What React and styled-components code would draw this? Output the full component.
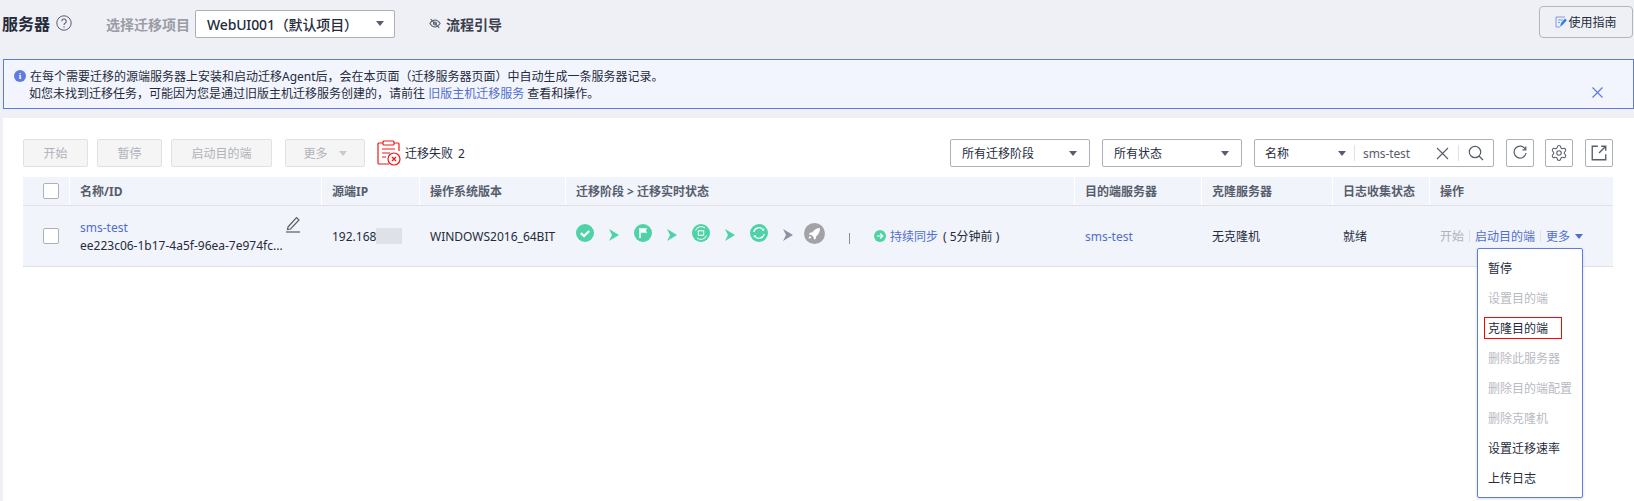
import React from "react";
import styled, { createGlobalStyle } from "styled-components";
import { Settings } from "lucide-react";

const Global = createGlobalStyle`
  html, body { margin: 0; padding: 0; height: 100%; overflow: hidden; background: #eff0f6; }
  body { font-family: "Noto Sans", "Noto Sans CJK SC", sans-serif; font-size: 12px; color: #252b3a; }
  * { box-sizing: border-box; }
`;

const Page = styled.div`
  position: relative;
  width: 1634px;
  height: 501px;
  padding-left: 3px;
  overflow: hidden;
  display: flex;
  flex-direction: column;
`;
const TopBar = styled.header`
  height: 47px;
  margin-bottom: 12px;
  display: flex;
  align-items: center;
  padding-right: 1px;
`;
const Title = styled.h1`
  margin: 0 0 0 -1px;
  font-size: 16px;
  font-weight: 700;
  line-height: 22px;
  color: #252b3a;
`;
const HelpIcon = styled.svg`
  width: 16px;
  height: 16px;
  margin: -2px 0 0 6px;
`;
const ProjectLabel = styled.span`
  margin-left: 34px;
  font-size: 14px;
  font-weight: 700;
  color: #9a9ca6;
`;
const ProjectSelect = styled.div`
  margin-left: 5px;
  width: 200px;
  height: 28px;
  background: #fff;
  border: 1px solid #adb0b8;
  border-radius: 2px;
  display: flex;
  align-items: center;
  justify-content: space-between;
  padding: 0 10px 0 11px;
  font-size: 14px;
  font-weight: 500;
`;
const ProjectName = styled.span`
  letter-spacing: -0.15px;
`;
const Caret = styled.i`
  display: block;
  width: 0;
  height: 0;
  margin-left: ${p => p.$ml || 0}px;
  border-left: 4px solid transparent;
  border-right: 4px solid transparent;
  border-top: 5px solid ${p => p.$color || "#575d6c"};
`;
const GuideLink = styled.span`
  margin-left: 34px;
  display: flex;
  align-items: center;
  gap: 5px;
  font-size: 14px;
  font-weight: 700;
  color: #3c404c;
`;
const GuideButton = styled.button`
  margin: -3px 0 0 auto;
  width: 94px;
  height: 32px;
  background: transparent;
  border: 1px solid #b3b5bd;
  border-radius: 4px;
  display: flex;
  align-items: center;
  justify-content: center;
  gap: 1px;
  font: inherit;
  font-size: 12px;
  color: #252b3a;
`;
const Alert = styled.section`
  position: relative;
  height: 50px;
  margin-bottom: 9px;
  border: 1px solid #5e7ce0;
  background: #f2f5fe;
  padding: 8px 0 0 26px;
  line-height: 17px;
  color: #252b3a;
`;
const AlertLine = styled.div`
  white-space: nowrap;
`;
const SecondLine = styled(AlertLine)`
  margin-left: -1px;
`;
const InfoDot = styled.span`
  position: absolute;
  left: 10px;
  top: 10px;
  width: 12px;
  height: 12px;
  border-radius: 50%;
  background: #5e7ce0;
  color: #fff;
  font: 700 9px/12px "Liberation Serif", serif;
  text-align: center;
`;
const AlertLink = styled.span`
  color: #526ecc;
`;
const CloseAlert = styled.svg`
  position: absolute;
  right: 30px;
  top: 27px;
  width: 11px;
  height: 11px;
`;
const Panel = styled.main`
  flex: 1;
  background: #fff;
  padding: 21px 21px 0 20px;
`;
const Toolbar = styled.div`
  display: flex;
  align-items: center;
  height: 28px;
  margin-bottom: 10px;
`;
const Action = styled.button`
  width: ${p => p.$w}px;
  height: 28px;
  margin-right: ${p => p.$gap}px;
  border: 1px solid #dfe1e6;
  border-radius: 2px;
  background: #f5f5f6;
  color: #b0b2ba;
  font: inherit;
  font-size: 12px;
  display: flex;
  align-items: center;
  justify-content: center;
  gap: 11px;
`;
const FailIcon = styled.svg`
  width: 24px;
  height: 26px;
  margin-right: 4px;
`;
const FailText = styled.span`
  font-size: 12px;
  color: #252b3a;
  word-spacing: 2px;
`;
const Filters = styled.div`
  margin-left: auto;
  display: flex;
  align-items: center;
`;
const Dropdown = styled.div`
  width: 140px;
  height: 28px;
  margin-right: 12px;
  border: 1px solid #adb0b8;
  border-radius: 2px;
  display: flex;
  align-items: center;
  justify-content: space-between;
  padding: 0 12px 0 11px;
`;
const Search = styled.div`
  width: 240px;
  height: 28px;
  margin-right: 12px;
  border: 1px solid #adb0b8;
  border-radius: 2px;
  display: flex;
  align-items: center;
  padding-left: 10px;
`;
const SearchField = styled.span`
  width: 89px;
  display: flex;
  align-items: center;
  justify-content: space-between;
  padding-right: 8px;
`;
const SearchDivider = styled.i`
  width: 1px;
  height: 16px;
  background: #dfe1e6;
`;
const SearchValue = styled.span`
  width: 78px;
  padding-left: 8px;
  color: #575d6c;
  letter-spacing: -0.1px;
`;
const ClearIcon = styled.svg`
  width: 13px;
  height: 13px;
  margin: 0 9px 0 3px;
`;
const SearchIcon = styled.svg`
  width: 16px;
  height: 16px;
  margin-left: 9px;
`;
const IconButton = styled.span`
  width: 28px;
  height: 28px;
  margin-right: ${p => p.$gap}px;
  border: 1px solid #adb0b8;
  border-radius: 2px;
  display: flex;
  align-items: center;
  justify-content: center;
`;
const Grid = `
  display: grid;
  grid-template-columns: 46px 252px 98px 146px 509px 127px 131px 97px 183px;
`;
const HeadRow = styled.div`
  ${Grid}
  height: 29px;
  background: #f1f4fb;
  border-bottom: 1px solid #dfe1e6;
`;
const HeadCell = styled.div`
  display: flex;
  align-items: center;
  padding-left: ${p => p.$pad ?? 10}px;
  border-left: ${p => (p.$first ? "none" : "1px solid #fff")};
  font-weight: 700;
  color: #575d6c;
  white-space: nowrap;
`;
const BodyRow = styled.div`
  ${Grid}
  height: 61px;
  background: #f1f4fb;
  border-bottom: 1px solid #dfe1e6;
`;
const BodyCell = styled.div`
  position: relative;
  display: flex;
  align-items: center;
  padding-left: ${p => p.$pad ?? 11}px;
  white-space: nowrap;
`;
const Check = styled.span`
  width: 16px;
  height: 16px;
  background: #fff;
  border: 1px solid #adb0b8;
  border-radius: 2px;
  margin-left: 20px;
`;
const NameBlock = styled.div`
  margin-top: 1px;
  line-height: 18px;
`;
const LinkText = styled.span`
  color: #526ecc;
`;
const EditIcon = styled.svg`
  position: absolute;
  left: 216px;
  top: 9px;
  width: 16px;
  height: 18px;
`;
const Masked = styled.i`
  width: 26px;
  height: 16px;
  margin: -1px 0 0 -4px;
  background: #dfe1e8;
`;
const StageRow = styled.div`
  display: flex;
  align-items: center;
  margin-top: -6px;
`;
const Arrow = styled.svg`
  width: 10px;
  height: 12px;
  margin: 3px 15px 0;
`;
const LastArrow = styled(Arrow)`
  margin-right: 11px;
`;
const StageDivider = styled.i`
  width: 1px;
  height: 11px;
  margin: 10px 0 0 24px;
  background: #8a8e99;
`;
const SyncStatus = styled.div`
  display: flex;
  align-items: center;
  margin-left: 24px;
  margin-top: 6px;
`;
const SyncDot = styled.svg`
  width: 12px;
  height: 12px;
  margin-right: 4px;
`;
const SyncTime = styled.span`
  margin-left: 5px;
  white-space: pre;
`;
const Ops = styled.div`
  display: flex;
  align-items: center;
`;
const OpDisabled = styled.span`
  color: #b0b2ba;
`;
const OpSep = styled.i`
  width: 1px;
  height: 12px;
  margin: 0 5px;
  background: #dfe1e6;
`;
const Menu = styled.ul`
  position: absolute;
  left: 1477px;
  top: 248px;
  width: 106px;
  height: 250px;
  margin: 0;
  padding: 5px 0 0;
  list-style: none;
  background: #fff;
  border: 1px solid #5e7ce0;
  border-radius: 2px;
  box-shadow: 0 1px 3px rgba(0, 0, 0, 0.15);
`;
const MenuItem = styled.li`
  height: 30px;
  line-height: 30px;
  padding-left: 10px;
  color: ${p => (p.$off ? "#b8bac2" : "#252b3a")};
  white-space: nowrap;
`;
const Highlight = styled.span`
  position: absolute;
  left: 6px;
  top: 68px;
  width: 78px;
  height: 22px;
  border: 1px solid #f00;
`;

const Ic = styled.svg`
  width: ${p => p.$s || 18}px;
  height: ${p => p.$s || 18}px;
  flex: none;
`;
const G = "#4fd2a6";

const StageArrow = ({ color, last }) => {
  const C = last ? LastArrow : Arrow;
  return (
    <C viewBox="0 0 10 12">
      <path d="M0 0 L10 6 L0 12 L3 6Z" fill={color || G} />
    </C>
  );
};

const App = () => (
  <Page>
    <Global />
    <TopBar>
      <Title>服务器</Title>
      <HelpIcon viewBox="0 0 16 16" fill="none" stroke="#575d6c">
        <circle cx="8" cy="8" r="7.2" />
        <path d="M5.8 6.2a2.2 2.2 0 1 1 3.4 1.9c-.8.5-1.2.9-1.2 1.9" strokeWidth="1.1" />
        <circle cx="8" cy="12" r=".7" fill="#575d6c" stroke="none" />
      </HelpIcon>
      <ProjectLabel>选择迁移项目</ProjectLabel>
      <ProjectSelect>
        <ProjectName>WebUI001（默认项目）</ProjectName>
        <Caret />
      </ProjectSelect>
      <GuideLink>
        <svg viewBox="0 0 14 12" width="12" height="11" fill="none" stroke="#575d6c" strokeWidth="1.2">
          <path d="M1 6c2-3 4-4 6-4s4 1 6 4c-2 3-4 4-6 4S3 9 1 6Z" />
          <circle cx="7" cy="6" r="1.8" />
          <path d="M2 1l10 10" />
        </svg>
        流程引导
      </GuideLink>
      <GuideButton>
        <svg viewBox="0 0 12 12" width="12" height="12" fill="none">
          <path d="M10 1H1v10h4" stroke="#7f97ee" />
          <path d="M3 4h5M3 6.500h2" stroke="#7f97ee" />
          <path d="M5 10.800 6 7l4-4.500 1.800 1.700-4 4.600Z" fill="#2f7fe8" />
        </svg>
        使用指南
      </GuideButton>
    </TopBar>

    <Alert>
      <InfoDot>i</InfoDot>
      <AlertLine>在每个需要迁移的源端服务器上安装和启动迁移Agent后，会在本页面（迁移服务器页面）中自动生成一条服务器记录。</AlertLine>
      <SecondLine>
        如您未找到迁移任务，可能因为您是通过旧版主机迁移服务创建的，请前往 <AlertLink>旧版主机迁移服务</AlertLink> 查看和操作。
      </SecondLine>
      <CloseAlert viewBox="0 0 11 11" stroke="#5e7ce0" strokeWidth="1.2">
        <path d="M.5.5l10 10M10.500.5l-10 10" />
      </CloseAlert>
    </Alert>

    <Panel>
      <Toolbar>
        <Action $w={65} $gap={9}>开始</Action>
        <Action $w={65} $gap={9}>暂停</Action>
        <Action $w={101} $gap={13}>启动目的端</Action>
        <Action $w={80} $gap={12}>
          更多
          <Caret $color="#c8cad0" />
        </Action>
        <FailIcon viewBox="0 0 24 26" fill="none" stroke="#f01818" strokeWidth="1.2">
          <path d="M6 3H2a1 1 0 0 0-1 1v19a1 1 0 0 0 1 1h10" />
          <path d="M17 3h4a1 1 0 0 1 1 1v7" />
          <rect x="6" y="1" width="11" height="4" rx="1" />
          <path d="M5 9h13M5 13h8M5 17h4" />
          <circle cx="17" cy="19" r="6" fill="#fff" />
          <path d="M15 17l4 4M19 17l-4 4" strokeWidth="1.4" />
        </FailIcon>
        <FailText>迁移失败 2</FailText>
        <Filters>
          <Dropdown>
            所有迁移阶段
            <Caret />
          </Dropdown>
          <Dropdown>
            所有状态
            <Caret />
          </Dropdown>
          <Search>
            <SearchField>
              名称
              <Caret />
            </SearchField>
            <SearchDivider />
            <SearchValue>sms-test</SearchValue>
            <ClearIcon viewBox="0 0 13 13" stroke="#575d6c" strokeWidth="1.1">
              <path d="M1 1l11 11M12 1L1 12" />
            </ClearIcon>
            <SearchDivider />
            <SearchIcon viewBox="0 0 16 16" fill="none" stroke="#575d6c" strokeWidth="1.2">
              <circle cx="7" cy="7" r="5.700" />
              <path d="M11 11l4 4" />
            </SearchIcon>
          </Search>
          <IconButton $gap={11}>
            <svg viewBox="0 0 16 16" width="16" height="16" fill="none" stroke="#575d6c" strokeWidth="1.2">
              <path d="M13.500 4.500A6 6 0 1 0 14 8" />
              <path d="M13.800 1.500v3.300h-3.300" />
            </svg>
          </IconButton>
          <IconButton $gap={12}>
            <Settings size={18} color="#575d6c" strokeWidth={1.4} />
          </IconButton>
          <IconButton $gap={0}>
            <svg viewBox="0 0 16 16" width="18" height="18" fill="none" stroke="#575d6c" strokeWidth="1.2">
              <path d="M7 2H2v12h12V9" />
              <path d="M10 2h4v4M14 2L8 8" />
            </svg>
          </IconButton>
        </Filters>
      </Toolbar>

      <HeadRow>
        <HeadCell $first $pad={0}><Check /></HeadCell>
        <HeadCell>名称/ID</HeadCell>
        <HeadCell>源端IP</HeadCell>
        <HeadCell>操作系统版本</HeadCell>
        <HeadCell>迁移阶段 &gt; 迁移实时状态</HeadCell>
        <HeadCell>目的端服务器</HeadCell>
        <HeadCell>克隆服务器</HeadCell>
        <HeadCell>日志收集状态</HeadCell>
        <HeadCell>操作</HeadCell>
      </HeadRow>
      <BodyRow>
        <BodyCell $pad={0}><Check /></BodyCell>
        <BodyCell>
          <NameBlock>
            <LinkText>sms-test</LinkText>
            <br />
            ee223c06-1b17-4a5f-96ea-7e974fc...
          </NameBlock>
          <EditIcon viewBox="0 0 16 18" fill="none" stroke="#575d6c" strokeWidth="1.2">
            <path d="M3 12 11.500 2.500 14 5l-8.500 9L2.500 14.500Z" />
            <path d="M1 17h14" />
          </EditIcon>
        </BodyCell>
        <BodyCell>
          192.168.
          <Masked />
        </BodyCell>
        <BodyCell>WINDOWS2016_64BIT</BodyCell>
        <BodyCell>
          <StageRow>
            <Ic viewBox="0 0 18 18">
              <circle cx="9" cy="9" r="9" fill={G} />
              <path d="M4.800 9.200 8 12l5.200-5" fill="none" stroke="#fff" strokeWidth="2.200" />
            </Ic>
            <StageArrow />
            <Ic viewBox="0 0 18 18">
              <circle cx="9" cy="9" r="9" fill={G} />
              <path d="M6 4v10" stroke="#fff" strokeWidth="1.600" />
              <path d="M6.500 4.200h6.800l-1.600 2.300 1.600 2.300H6.500Z" fill="#fff" />
            </Ic>
            <StageArrow />
            <Ic viewBox="0 0 18 18">
              <circle cx="9" cy="9" r="9" fill={G} />
              <rect x="6.300" y="6.800" width="5.400" height="4.400" fill="none" stroke="#fff" />
              <path d="M3.500 6.500A6 6 0 0 1 13 4M14.500 11.500A6 6 0 0 1 5 14" fill="none" stroke="#fff" />
            </Ic>
            <StageArrow />
            <Ic viewBox="0 0 18 18">
              <circle cx="9" cy="9" r="9" fill={G} />
              <path d="M3.800 8A5.300 5.300 0 0 1 13.400 6M14.200 10A5.300 5.300 0 0 1 4.600 12" fill="none" stroke="#fff" strokeWidth="1.300" />
              <path d="M14.200 4.200v2.600h-2.600M3.800 13.800v-2.600h2.600" fill="#fff" />
            </Ic>
            <StageArrow color="#8f92a0" last />
            <Ic $s={21} viewBox="0 0 21 21">
              <circle cx="10.500" cy="10.500" r="10.500" fill="#a3a3a6" />
              <path d="M16 5c-3.500.2-5.600 1.500-7.500 4.200L6 9.800 4.800 11.600l2.900.5 1.800 1.800.6 2.900 1.700-1.300.6-2.400C15 11 15.900 8.500 16 5Z" fill="#fff" />
              <path d="M6 13c-1 .6-1.300 1.600-1.400 2.700 1.100-.1 2.100-.5 2.700-1.400Z" fill="#fff" />
            </Ic>
            <StageDivider />
            <SyncStatus>
              <SyncDot viewBox="0 0 12 12">
                <circle cx="6" cy="6" r="6" fill={G} />
                <path d="M3 6h5.500M6.200 3.500 8.700 6 6.200 8.500" fill="none" stroke="#fff" strokeWidth="1.200" />
              </SyncDot>
              <LinkText>持续同步</LinkText>
              <SyncTime>( 5分钟前 )</SyncTime>
            </SyncStatus>
          </StageRow>
        </BodyCell>
        <BodyCell><LinkText>sms-test</LinkText></BodyCell>
        <BodyCell>无克隆机</BodyCell>
        <BodyCell>就绪</BodyCell>
        <BodyCell>
          <Ops>
            <OpDisabled>开始</OpDisabled>
            <OpSep />
            <LinkText>启动目的端</LinkText>
            <OpSep />
            <LinkText>更多</LinkText>
            <Caret $color="#526ecc" $ml={5} />
          </Ops>
        </BodyCell>
      </BodyRow>
    </Panel>

    <Menu>
      <MenuItem>暂停</MenuItem>
      <MenuItem $off>设置目的端</MenuItem>
      <MenuItem>克隆目的端</MenuItem>
      <MenuItem $off>删除此服务器</MenuItem>
      <MenuItem $off>删除目的端配置</MenuItem>
      <MenuItem $off>删除克隆机</MenuItem>
      <MenuItem>设置迁移速率</MenuItem>
      <MenuItem>上传日志</MenuItem>
      <Highlight />
    </Menu>
  </Page>
);

export default App;
